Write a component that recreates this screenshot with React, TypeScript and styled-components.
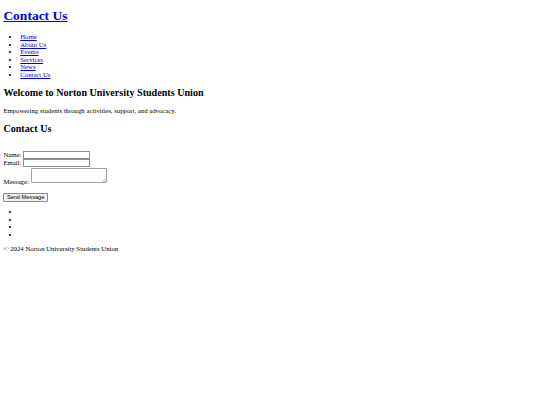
import React from "react";
import styled, { createGlobalStyle } from "styled-components";

// reference is a 1280px wide page shrunk to 540px
const S = 540 / 1280;
const px = (n: number) => `${(n * S).toFixed(3)}px`;

const GlobalStyle = createGlobalStyle`
  html, body {
    background: #ffffff;
  }
  body {
    margin: ${px(8)};
    font-family: "Liberation Serif", "Times New Roman", serif;
    font-size: ${px(16)};
    line-height: ${px(18)};
    color: #000000;
  }
  a {
    color: #0000ee;
  }
`;

const Title = styled.h1`
  font-size: ${px(32)};
  line-height: ${px(37)};
  font-weight: bold;
  margin: ${px(12)} 0 ${px(21.44)};
`;

const List = styled.ul`
  margin: ${px(16)} 0;
  padding-left: ${px(40)};
  list-style: disc;
`;

const Heading = styled.h2`
  font-size: ${px(24)};
  line-height: ${px(28)};
  font-weight: bold;
  margin: ${px(19.92)} 0;
`;

const Text = styled.p`
  margin: ${px(16)} 0;
`;

const Form = styled.form`
  margin: 0;
  padding-top: ${px(17)};
`;

const FieldRow = styled.div`
  display: flex;
  align-items: center;
  gap: ${px(4)};
`;

const MessageRow = styled.div`
  margin-top: ${px(2)};
`;

const ButtonRow = styled.div`
  margin-top: ${px(18)};
`;

const Input = styled.input`
  box-sizing: border-box;
  width: ${px(159)};
  height: ${px(19.5)};
  margin: 0;
  padding: ${px(1)} ${px(2)};
  border: 1px solid #8f8f8f;
  border-radius: 0;
  font-family: "Liberation Sans", Arial, sans-serif;
  font-size: ${px(13.33)};
`;

const AreaWrap = styled.span`
  position: relative;
  display: inline-block;
  vertical-align: baseline;
`;

const TextArea = styled.textarea`
  display: block;
  box-sizing: border-box;
  width: ${px(182)};
  height: ${px(37)};
  margin: 0;
  padding: ${px(2)};
  border: 1px solid #a0a0a0;
  border-radius: 1px;
  font-family: "Liberation Mono", monospace;
  font-size: ${px(13.33)};
  resize: none;
`;

const Grip = styled.svg`
  position: absolute;
  right: 1px;
  bottom: 1px;
  width: 4px;
  height: 4px;
  pointer-events: none;
`;

const Button = styled.button`
  box-sizing: border-box;
  padding: ${px(1)} ${px(6)};
  border: 1px solid #8a8a8a;
  border-radius: 1px;
  background: #efefef;
  color: #000000;
  font-family: "Liberation Sans", Arial, sans-serif;
  font-size: ${px(13.33)};
  line-height: normal;
`;

const Footer = styled.footer`
  margin: 0;
`;

const navLinks = ["Home", "About Us", "Events", "Services", "News", "Contact Us"];

export default function App() {
  return (
    <>
      <GlobalStyle />
      <header>
        <Title>
          <a href="#contact">Contact Us</a>
        </Title>
        <nav>
          <List>
            {navLinks.map((item) => (
              <li key={item}>
                <a href={`#${item.toLowerCase().replace(" ", "-")}`}>{item}</a>
              </li>
            ))}
          </List>
        </nav>
      </header>
      <main>
        <section>
          <Heading>Welcome to Norton University Students Union</Heading>
          <Text>Empowering students through activities, support, and advocacy.</Text>
        </section>
        <section>
          <Heading>Contact Us</Heading>
          <Form onSubmit={(e) => e.preventDefault()}>
            <FieldRow>
              <label htmlFor="name">Name:</label>
              <Input id="name" type="text" />
            </FieldRow>
            <FieldRow>
              <label htmlFor="email">Email:</label>
              <Input id="email" type="email" />
            </FieldRow>
            <MessageRow>
              <label htmlFor="message">Message: </label>
              <AreaWrap>
                <TextArea id="message" />
                <Grip viewBox="0 0 4 4">
                  <path d="M4 0.5 L0.5 4 M4 2.5 L2.5 4" stroke="#8a8a8a" strokeWidth="0.7" />
                </Grip>
              </AreaWrap>
            </MessageRow>
            <ButtonRow>
              <Button type="submit">Send Message</Button>
            </ButtonRow>
          </Form>
        </section>
      </main>
      <Footer>
        <List>
          <li />
          <li />
          <li />
          <li />
        </List>
        <Text>© 2024 Norton University Students Union</Text>
      </Footer>
    </>
  );
}
